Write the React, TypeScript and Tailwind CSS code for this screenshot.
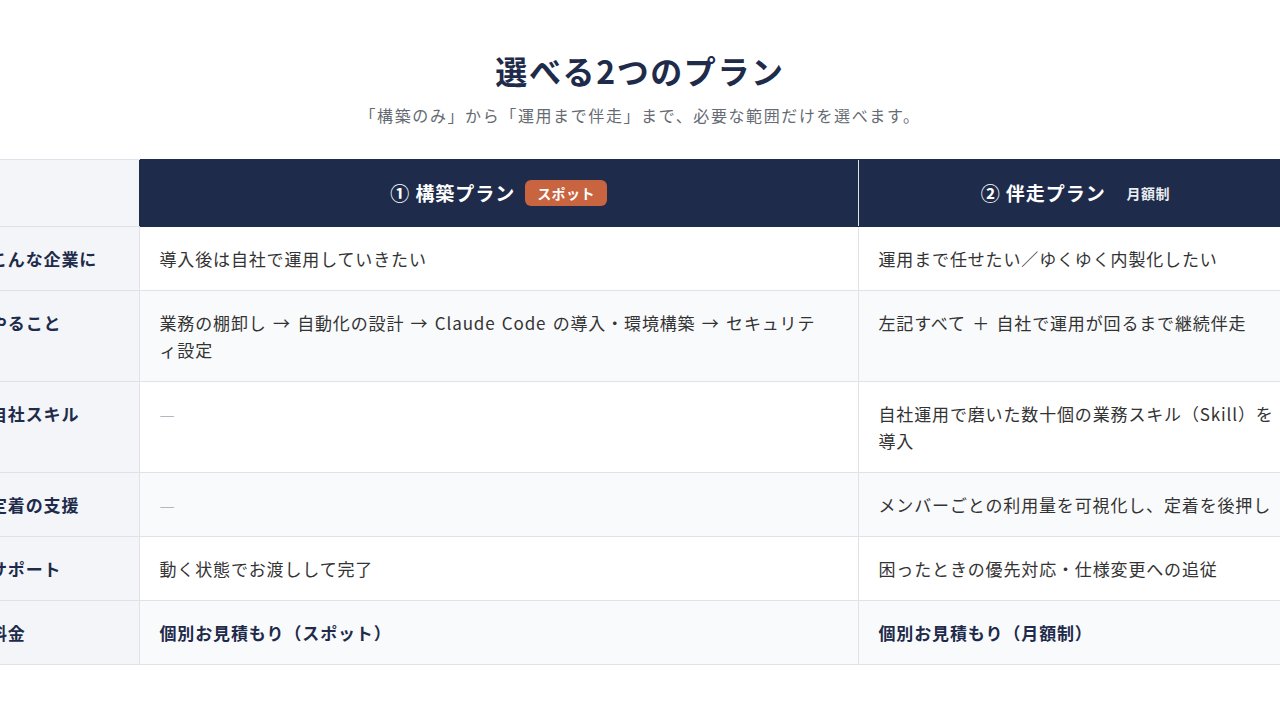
import React from "react";

type Row = {
  label: string;
  spot: string;
  monthly: string;
  strong?: boolean;
};

const rows: Row[] = [
  {
    label: "こんな企業に",
    spot: "導入後は自社で運用していきたい",
    monthly: "運用まで任せたい／ゆくゆく内製化したい",
  },
  {
    label: "やること",
    spot: "業務の棚卸し → 自動化の設計 → Claude Code の導入・環境構築 → セキュリティ設定",
    monthly: "左記すべて ＋ 自社で運用が回るまで継続伴走",
  },
  {
    label: "自社スキル",
    spot: "—",
    monthly: "自社運用で磨いた数十個の業務スキル（Skill）を導入",
  },
  {
    label: "定着の支援",
    spot: "—",
    monthly: "メンバーごとの利用量を可視化し、定着を後押し",
  },
  {
    label: "サポート",
    spot: "動く状態でお渡しして完了",
    monthly: "困ったときの優先対応・仕様変更への追従",
  },
  {
    label: "料金",
    spot: "個別お見積もり（スポット）",
    monthly: "個別お見積もり（月額制）",
    strong: true,
  },
];

const font = {
  fontFamily: '"Noto Sans CJK JP", "Noto Sans", sans-serif',
};

const Cell = ({
  text,
  strong,
  wide,
}: {
  text: string;
  strong?: boolean;
  wide?: boolean;
}) => {
  const isDash = text === "—";
  return (
    <td
      className={
        "border-b border-l border-[#dfe3e9] py-[18px] pl-[20px] align-top text-[17px] leading-[27px] tracking-[0.05em] [word-spacing:0.1em] " +
        (wide ? "pr-[40px] " : "pr-[20px] ") +
        (isDash
          ? "text-[#b3b8c0]"
          : strong
            ? "font-bold text-[#1e2b4a]"
            : "text-[#333]")
      }
    >
      {text}
    </td>
  );
};

export default function App() {
  return (
    <div className="min-h-screen bg-white" style={font}>
      {/* Heading */}
      <div className="flex flex-col items-center pt-[48px]">
        <h2 className="text-[32px] font-bold leading-[45px] tracking-[0.05em] text-[#1e2b4a]">
          選べる2つのプラン
        </h2>
        <p className="mt-[9px] text-[16px] leading-[27px] tracking-[0.1em] text-[#666b73]">
          「構築のみ」から「運用まで伴走」まで、必要な範囲だけを選べます。
        </p>
      </div>

      {/* Comparison table */}
      <div className="mt-[30px] flex justify-center overflow-hidden">
        <table className="w-[1326px] shrink-0 table-fixed border-collapse">
          <colgroup>
            <col className="w-[162px]" />
            <col className="w-[719px]" />
            <col className="w-[445px]" />
          </colgroup>
          <thead>
            <tr>
              <th className="border-y border-[#dfe3e9] bg-[#f3f5f8]" />
              <th className="h-[67px] border-y border-l border-[#1e2b4a] bg-[#1e2b4a] px-[20px] text-white">
                <div className="flex items-center justify-center">
                  <span className="text-[19px] font-bold leading-[30px] tracking-[0.05em]">
                    ① 構築プラン
                  </span>
                  <span className="ml-[10px] rounded-md bg-[#c8643f] px-[12px] py-[3px] text-[14px] font-bold leading-[20px] tracking-[0.03em]">
                    スポット
                  </span>
                </div>
              </th>
              <th className="h-[67px] border-y border-l border-y-[#1e2b4a] border-l-[#dfe3e9] bg-[#1e2b4a] px-[20px] text-white">
                <div className="flex items-center justify-center">
                  <span className="text-[19px] font-bold leading-[30px] tracking-[0.05em]">
                    ② 伴走プラン
                  </span>
                  <span className="ml-[10px] px-[11px] py-[3px] text-[14px] font-bold leading-[20px] tracking-[0.03em] text-[#e8ebf0]">
                    月額制
                  </span>
                </div>
              </th>
            </tr>
          </thead>
          <tbody>
            {rows.map((row, i) => (
              <tr key={row.label} className={i % 2 === 1 ? "bg-[#f9fafc]" : "bg-white"}>
                <th className="border-b border-[#dfe3e9] bg-[#f3f5f8] py-[18px] pl-[13px] pr-[12px] text-left align-top text-[17px] font-bold leading-[27px] tracking-[0.05em] whitespace-nowrap text-[#1e2b4a]">
                  {row.label}
                </th>
                <Cell text={row.spot} strong={row.strong} wide />
                <Cell text={row.monthly} strong={row.strong} />
              </tr>
            ))}
          </tbody>
        </table>
      </div>
    </div>
  );
}
